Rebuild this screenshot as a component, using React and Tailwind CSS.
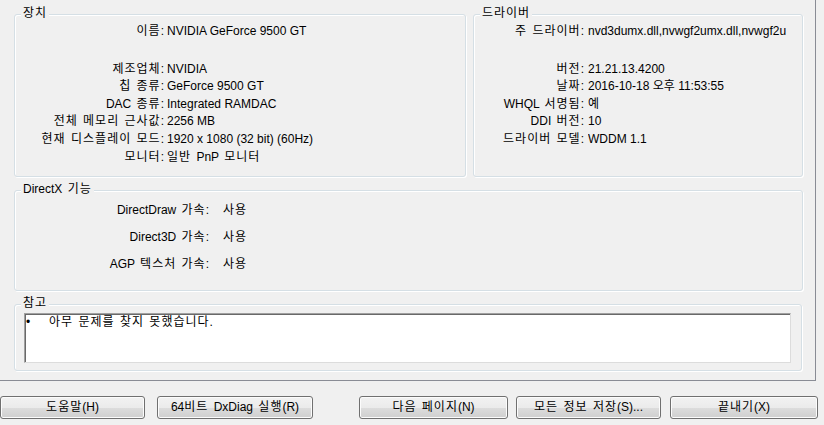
import React from 'react'

// DxDiag "디스플레이" tab, Windows 7 look

// hangul runs get a little extra tracking so they read like Gulim
function K({ children }) {
  return String(children)
    .split(/([\uac00-\ud7a3]+)/)
    .map((part, i) =>
      /[\uac00-\ud7a3]/.test(part) ? (
        <span key={i} className="tracking-[1px]">
          {part}
        </span>
      ) : (
        part
      )
    )
}

function Group({ title, className, children }) {
  return (
    <div
      className={`relative rounded-[3px] border border-[#d5dfe5] shadow-[inset_1px_1px_0_#ffffff,1px_1px_0_#ffffff] ${className}`}
    >
      <span className="absolute left-[6px] top-[-9px] bg-[#f0f0f0] px-[2px] leading-[14px] whitespace-nowrap [word-spacing:2px]">
        <K>{title}</K>
      </span>
      {children}
    </div>
  )
}

function Row({ label, value, labelClass, gapClass = 'ml-[3px]', rowClass = 'h-[17.6px]', ko = false }) {
  return (
    <div className={`flex items-center leading-[17.6px] ${rowClass}`}>
      <div className={`shrink-0 text-right whitespace-nowrap [word-spacing:2px] ${labelClass}`}>
        <K>{label}</K>
      </div>
      <div className={`min-w-0 flex-1 overflow-hidden whitespace-nowrap ${ko ? '[word-spacing:2px]' : ''} ${gapClass}`}>
        {ko ? <K>{value}</K> : value}
      </div>
    </div>
  )
}

function Button({ children, className }) {
  return (
    <button
      type="button"
      className={`h-[23px] shrink-0 rounded-[3px] border border-[#707070] bg-[linear-gradient(#f2f2f2_0%,#ebebeb_50%,#dddddd_50%,#cfcfcf_100%)] text-center leading-[21px] text-black shadow-[inset_0_0_0_1px_#fcfcfc] [word-spacing:2px] ${className}`}
    >
      <K>{children}</K>
    </button>
  )
}

export default function App() {
  return (
    <div className="h-[425px] w-[824px] overflow-hidden bg-[#f0f0f0] font-['Liberation_Sans','Noto_Sans_CJK_KR',sans-serif] text-[12px] text-black">
      <div className="h-[381px] w-[816px] border-r border-b border-[#898c95] pl-[14px] pt-[14px]">
        <div className="flex gap-[7px]">
          <Group title="장치" className="h-[163px] w-[452px]">
            <div className="pt-[8px]">
              <Row label="이름:" value="NVIDIA GeForce 9500 GT" labelClass="w-[149px]" />
              <div className="h-[20px]" />
              <Row label="제조업체:" value="NVIDIA" labelClass="w-[149px]" />
              <Row label="칩 종류:" value="GeForce 9500 GT" labelClass="w-[149px]" />
              <Row label="DAC 종류:" value="Integrated RAMDAC" labelClass="w-[149px]" />
              <Row label="전체 메모리 근사값:" value="2256 MB" labelClass="w-[149px]" />
              <Row label="현재 디스플레이 모드:" value="1920 x 1080 (32 bit) (60Hz)" labelClass="w-[149px]" />
              <Row label="모니터:" value="일반 PnP 모니터" labelClass="w-[149px]" ko />
            </div>
          </Group>
          <Group title="드라이버" className="h-[163px] w-[330px]">
            <div className="pr-[6px] pt-[8px]">
              <Row
                label="주 드라이버:"
                value="nvd3dumx.dll,nvwgf2umx.dll,nvwgf2u"
                labelClass="w-[110px]"
                gapClass="ml-[4px]"
              />
              <div className="h-[20px]" />
              <Row label="버전:" value="21.21.13.4200" labelClass="w-[110px]" gapClass="ml-[4px]" />
              <Row label="날짜:" value="2016-10-18 오후 11:53:55" labelClass="w-[110px]" gapClass="ml-[4px]" />
              <Row label="WHQL 서명됨:" value="예" labelClass="w-[110px]" gapClass="ml-[4px]" />
              <Row label="DDI 버전:" value="10" labelClass="w-[110px]" gapClass="ml-[4px]" />
              <Row label="드라이버 모델:" value="WDDM 1.1" labelClass="w-[110px]" gapClass="ml-[4px]" />
            </div>
          </Group>
        </div>

        <Group title="DirectX 기능" className="mt-[13px] h-[101px] w-[789px]">
          <div className="pt-[6px]">
            <Row label="DirectDraw 가속:" value="사용" labelClass="w-[194px]" gapClass="ml-[14px]" rowClass="h-[27px]" ko />
            <Row label="Direct3D 가속:" value="사용" labelClass="w-[194px]" gapClass="ml-[14px]" rowClass="h-[27px]" ko />
            <Row label="AGP 텍스처 가속:" value="사용" labelClass="w-[194px]" gapClass="ml-[14px]" rowClass="h-[27px]" ko />
          </div>
        </Group>

        <Group title="참고" className="mt-[13px] h-[67px] w-[788px]">
          <div className="ml-[9px] mt-[8px] h-[50px] w-[767px] border border-t-[#a0a0a0] border-l-[#a0a0a0] border-r-[#dcdcdc] border-b-[#dcdcdc] bg-white shadow-[inset_1px_1px_0_#696969]">
            <div className="flex leading-[17.6px]">
              <span className="w-[24px] pl-[1px]">•</span>
              <span className="[word-spacing:2px]">
                <K>아무 문제를 찾지 못했습니다.</K>
              </span>
            </div>
          </div>
        </Group>
      </div>

      <div className="mt-[15px] flex">
        <Button className="w-[145px]">도움말(H)</Button>
        <Button className="ml-[12px] w-[156px]">64비트 DxDiag 실행(R)</Button>
        <Button className="ml-[46px] w-[149px]">다음 페이지(N)</Button>
        <Button className="ml-[8px] w-[145px]">모든 정보 저장(S)...</Button>
        <Button className="ml-[9px] w-[148px]">끝내기(X)</Button>
      </div>
    </div>
  )
}
